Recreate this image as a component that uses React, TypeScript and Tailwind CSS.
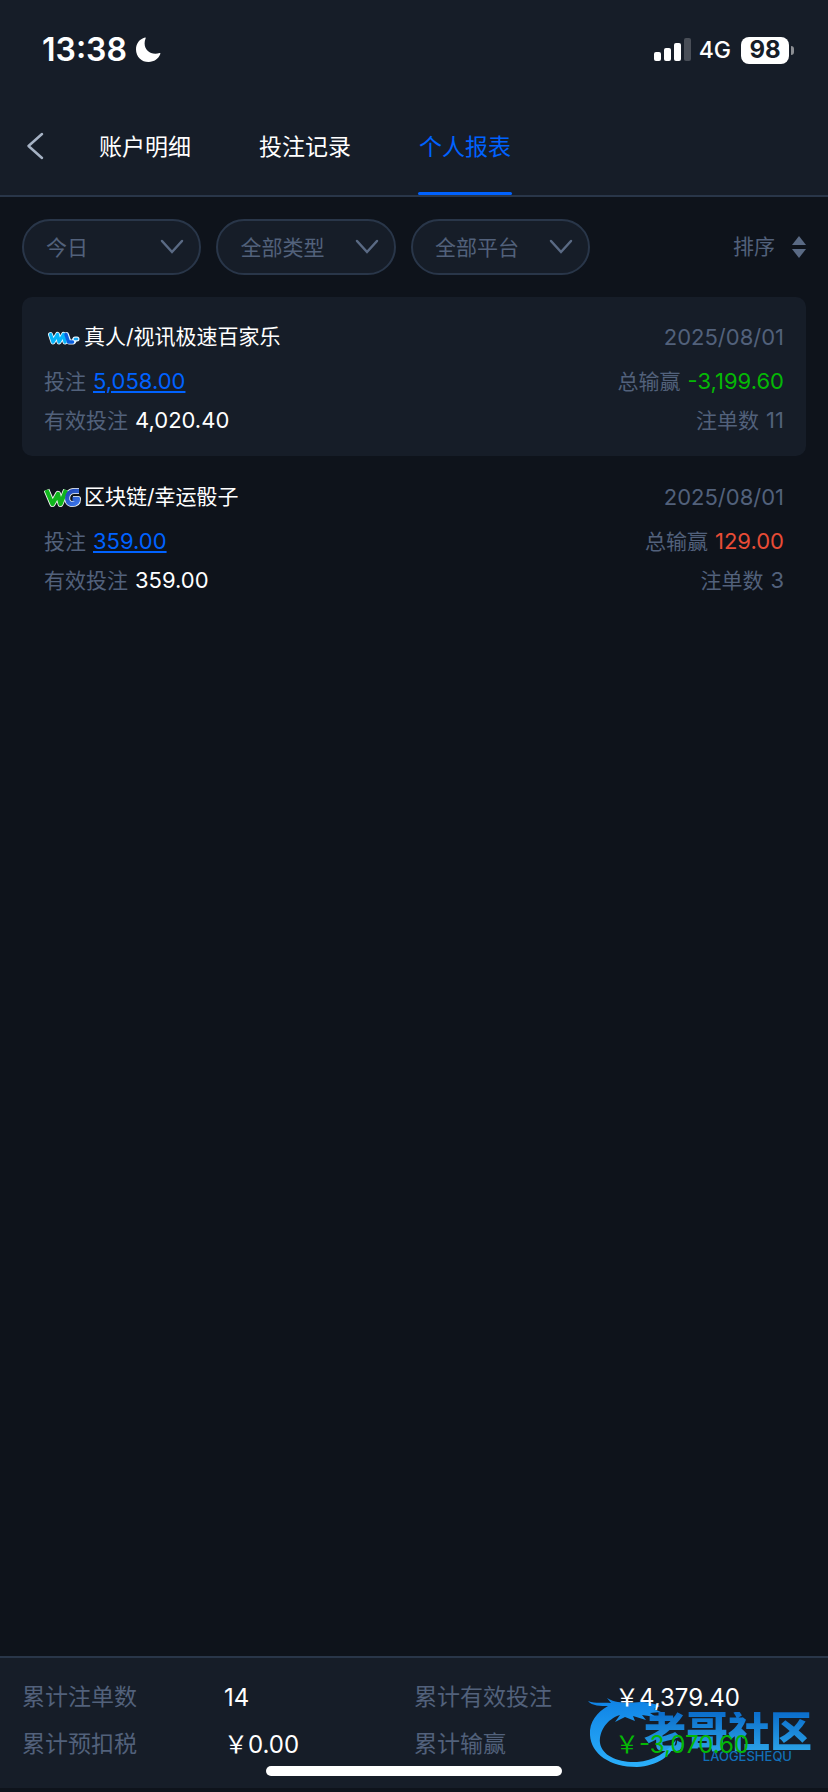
import React, { useState } from 'react';
import clsx from 'clsx';

type LogoName = 'wm' | 'wg';

interface ReportItem {
  id: number;
  logo: LogoName;
  title: string;
  date: string;
  bet: string;
  validBet: string;
  profit: string;
  orders: number;
}

const TABS = ['账户明细', '投注记录', '个人报表'];

const FILTERS = [
  { label: '日期', options: ['今日', '昨日', '近7日'] },
  { label: '类型', options: ['全部类型', '真人', '区块链'] },
  { label: '平台', options: ['全部平台', 'WM', 'WG'] },
];

const ITEMS: ReportItem[] = [
  {
    id: 1,
    logo: 'wm',
    title: '真人/视讯极速百家乐',
    date: '2025/08/01',
    bet: '5,058.00',
    validBet: '4,020.40',
    profit: '-3,199.60',
    orders: 11,
  },
  {
    id: 2,
    logo: 'wg',
    title: '区块链/幸运骰子',
    date: '2025/08/01',
    bet: '359.00',
    validBet: '359.00',
    profit: '129.00',
    orders: 3,
  },
];

function StatusBar() {
  return (
    <div className="flex h-[100px] items-center justify-between pl-[42px] pr-[34px] text-white">
      <div className="flex items-center gap-2">
        <span className="text-[32px] font-semibold leading-10">13:38</span>
        <svg width="26" height="26" viewBox="0 0 26 26" fill="currentColor" aria-hidden="true">
          <path d="M10 0.6C4.6 2 1 6.800 1 12.400C1 19.600 6.600 25 13.600 25C19 25 23.600 21.800 25.400 16.800C25.600 16.200 25.200 15.800 24.600 16C23.200 16.500 21.800 16.700 20.400 16.700C14.200 16.700 9.600 12.200 9.600 6.200C9.600 4.500 10 3 10.600 1.500C10.900 0.900 10.600 0.500 10 0.600Z" />
        </svg>
      </div>
      <div className="flex items-center">
        <svg width="37" height="24" viewBox="0 0 37 24" fill="currentColor" aria-hidden="true">
          <rect x="0" y="14" width="7" height="9" rx="2" />
          <rect x="10" y="10" width="7" height="13" rx="2" />
          <rect x="20" y="5" width="7" height="18" rx="2" />
          <rect x="30" y="0" width="7" height="23" rx="2" opacity="0.22" />
        </svg>
        <span className="ml-2 text-[23px] font-medium leading-8">4G</span>
        <span className="ml-[10px] flex h-[27px] w-12 items-center justify-center rounded-lg bg-white text-[24px] font-bold leading-6 text-[#161d28]">
          98
        </span>
        <span className="ml-[2px] h-[9px] w-[3px] rounded-r-full bg-[#8b8e93]" />
      </div>
    </div>
  );
}

function WmLogo() {
  return (
    <svg width="40" height="24" viewBox="0 0 40 24" fill="none" strokeLinecap="round" strokeLinejoin="round" aria-hidden="true">
      <g stroke="#e6f6ff" strokeWidth="5">
        <path d="M6.500 9.500L9 17L13.500 9.500L15 17L19.500 9.500L21 17" />
        <path d="M22.500 9.500L25 17H29.500L30.500 15" />
        <path d="M31 14H33" />
      </g>
      <path d="M6.500 9.500L9 17L13.500 9.500L15 17L19.500 9.500L21 17" stroke="#05b4fb" strokeWidth="3.300" />
      <path d="M22 9.500L24.500 17H28.500" stroke="#0a5fe0" strokeWidth="3.500" />
      <path d="M31 14H33" stroke="#16a8f5" strokeWidth="2.600" />
    </svg>
  );
}

function WgLogo() {
  return (
    <svg width="40" height="24" viewBox="0 0 40 24" fill="none" strokeLinejoin="round" aria-hidden="true">
      <defs>
        <linearGradient id="wg-blue" x1="22" y1="3" x2="36" y2="20" gradientUnits="userSpaceOnUse">
          <stop stopColor="#1c3fae" />
          <stop offset="1" stopColor="#3d7bf0" />
        </linearGradient>
      </defs>
      <g stroke="#f3f6f3" strokeWidth="6">
        <path d="M2.500 5L8.500 19L14 9L16.500 19L22 5" />
        <path d="M35 6H30C21.500 6 21 19 28 19C32.500 19 34 17 34 14H29" />
      </g>
      <path d="M2.500 5L8.500 19L14 9L16.500 19L22 5" stroke="#10b51c" strokeWidth="4.300" />
      <path d="M35 6H30C21.500 6 21 19 28 19C32.500 19 34 17 34 14H28.500" stroke="url(#wg-blue)" strokeWidth="4.300" />
    </svg>
  );
}

function FilterSelect({ label, options }: { label: string; options: string[] }) {
  return (
    <div className="relative min-w-0 flex-1">
      <select
        aria-label={label}
        className="h-14 w-full appearance-none rounded-full border-2 border-[#293649] bg-[#161d28] pl-[22px] pr-11 pt-[2px] text-[21px] text-[#52617b] outline-none"
      >
        {options.map((o) => (
          <option key={o}>{o}</option>
        ))}
      </select>
      <svg
        className="pointer-events-none absolute right-[17px] top-5 text-[#5a6a84]"
        width="24"
        height="16"
        viewBox="0 0 24 16"
        fill="none"
        stroke="currentColor"
        strokeWidth="2.500"
        strokeLinecap="round"
        aria-hidden="true"
      >
        <path d="M2 2L12 13L22 2" />
      </svg>
    </div>
  );
}

function ReportCard({ item, striped }: { item: ReportItem; striped: boolean }) {
  const negative = item.profit.startsWith('-');

  return (
    <li className={clsx('rounded-[10px] px-[22px] pb-4 pt-5', striped && 'bg-[#161d28]')}>
      <div className="mb-1 flex h-10 items-center justify-between">
        <div className="flex items-center">
          {item.logo === 'wm' ? <WmLogo /> : <WgLogo />}
          <h2 className="text-[21px] text-white">{item.title}</h2>
        </div>
        <time className="text-[22px]">{item.date}</time>
      </div>
      <div className="flex h-10 items-center justify-between">
        <div className="flex items-baseline gap-[7px]">
          <span>投注</span>
          <a href="#bets" className="text-[22px] text-[#0062ff] underline decoration-2 underline-offset-2">
            {item.bet}
          </a>
        </div>
        <div className="flex items-baseline gap-[7px]">
          <span>总输赢</span>
          <span className={clsx('text-[22px]', negative ? 'text-[#05b805]' : 'text-[#e84c36]')}>{item.profit}</span>
        </div>
      </div>
      <div className="flex h-[39px] items-center justify-between">
        <div className="flex items-baseline gap-[7px]">
          <span>有效投注</span>
          <span className="text-[22px] text-white">{item.validBet}</span>
        </div>
        <div className="flex items-baseline gap-[7px]">
          <span>注单数</span>
          <span className="text-[22px]">{item.orders}</span>
        </div>
      </div>
    </li>
  );
}

function Watermark() {
  return (
    <div className="pointer-events-none absolute bottom-5 right-4 h-[74px] w-[224px]" aria-hidden="true">
      <svg className="absolute left-0 top-0" width="100" height="74" viewBox="0 0 100 74" fill="none">
        <defs>
          <linearGradient id="ring" x1="0" y1="0" x2="0" y2="74" gradientUnits="userSpaceOnUse">
            <stop stopColor="#0d7fe3" />
            <stop offset="1" stopColor="#2bb0fb" />
          </linearGradient>
        </defs>
        <path
          d="M0 7C8 10 15 8 23 9L19 4C27 9 33 8 39 9L53 8C59 8 64 9 72 12L66 15L73 18L62 19L68 23L54 21L58 26L45 22L47 27L37 23L27 28L32 21C19 25 11 37 12 49C14 62 31 69 49 68C66 67 79 58 88 46C85 62 69 72 49 73C22 73 3 60 2 41C1 28 9 18 20 12C13 12 4 12 0 7Z"
          fill="url(#ring)"
        />
      </svg>
      <div className="absolute right-0 top-[18px] flex flex-col items-end">
        <span className="bg-gradient-to-b from-[#0a76de] to-[#2fb2fb] bg-clip-text text-[42px] font-black leading-10 text-transparent opacity-90">
          老哥社区
        </span>
        <span className="mr-5 text-[13px] font-medium leading-2 text-[#126fb8]">LAOGESHEQU</span>
      </div>
    </div>
  );
}

export default function App() {
  const [activeTab, setActiveTab] = useState(2);

  return (
    <div className="flex min-h-screen flex-col bg-[#0e131b] pb-1 font-[Inter,'Noto_Sans_CJK_SC',sans-serif] text-[21px] text-[#52617b]">
      <header className="border-b-2 border-[#293649] bg-[#161d28]">
        <StatusBar />
        <nav className="flex h-[95px] items-stretch">
          <button type="button" aria-label="返回" className="flex w-[65px] items-center pb-1 pl-[26px] text-[#a6b2c4]">
            <svg width="18" height="28" viewBox="0 0 18 28" fill="none" stroke="currentColor" strokeWidth="2.500" strokeLinecap="round" strokeLinejoin="round" aria-hidden="true">
              <path d="M16 2L2.500 14L16 26" />
            </svg>
          </button>
          {TABS.map((tab, i) => (
            <button
              key={tab}
              type="button"
              onClick={() => setActiveTab(i)}
              className={clsx(
                'flex w-40 flex-col items-center pt-[2px] text-[23px]',
                i === activeTab ? 'text-[#0062ff]' : 'text-white'
              )}
            >
              <span className="flex flex-1 items-center">{tab}</span>
              <span className={clsx('h-[3px] w-[94px] rounded-full', i === activeTab && 'bg-[#0062ff]')} />
            </button>
          ))}
        </nav>
      </header>

      <main className="flex-1 px-[22px]">
        <div className="flex items-center justify-between py-[22px]">
          <div className="flex w-[72.5%] gap-[15px]">
            {FILTERS.map((f) => (
              <FilterSelect key={f.label} label={f.label} options={f.options} />
            ))}
          </div>
          <button type="button" className="flex items-center gap-[17px]">
            排序
            <svg width="14" height="22" viewBox="0 0 14 22" fill="#5a6a84" aria-hidden="true">
              <path d="M7 0L14 9H0Z" />
              <path d="M7 22L0 13H14Z" />
            </svg>
          </button>
        </div>

        <ul className="flex flex-col gap-px">
          {ITEMS.map((item, i) => (
            <ReportCard key={item.id} item={item} striped={i % 2 === 0} />
          ))}
        </ul>
      </main>

      <footer className="relative border-t-2 border-[#293649] bg-[#161d28] px-[22px] pb-5 pt-4 text-[23px]">
        <Watermark />
        <dl className="relative grid grid-cols-[202fr_190fr_201fr_191fr] leading-[47px]">
          <dt>累计注单数</dt>
          <dd className="text-[24px] text-white">14</dd>
          <dt>累计有效投注</dt>
          <dd className="text-[24px] text-white">￥4,379.40</dd>
          <dt>累计预扣税</dt>
          <dd className="text-[24px] text-white">￥0.00</dd>
          <dt>累计输赢</dt>
          <dd className="text-[24px] text-[#05b805]">￥-3,070.60</dd>
        </dl>
        <div className="absolute bottom-3 left-1/2 h-[10px] w-[296px] -translate-x-1/2 rounded-full bg-white" />
      </footer>
    </div>
  );
}
